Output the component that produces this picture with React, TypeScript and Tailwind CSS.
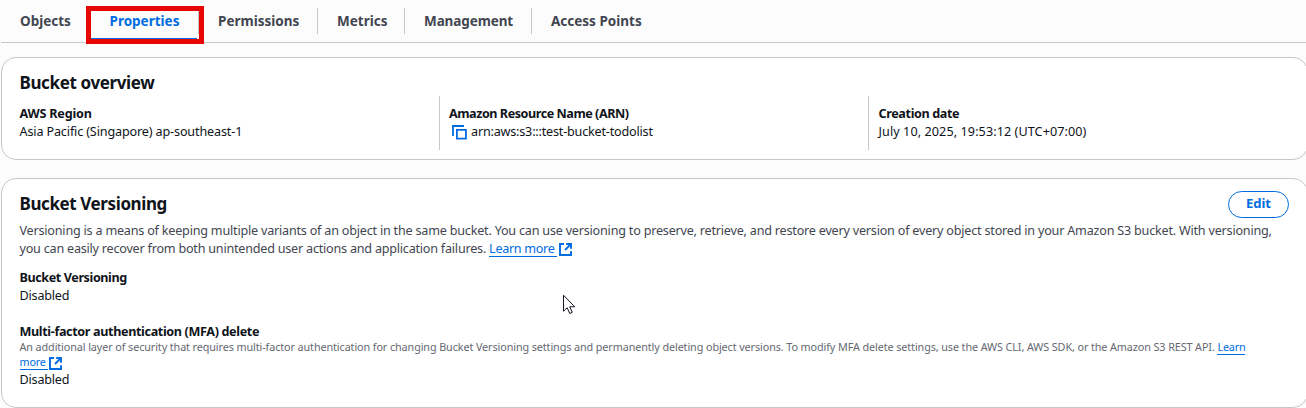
import type { ReactNode } from 'react';

function CopyIcon() {
  return (
    <svg width="15" height="15" viewBox="0 0 15 15" fill="none" stroke="#006ce0" strokeWidth="1.8" className="shrink-0">
      <path d="M1 11V1H12" />
      <path d="M4.9 4.9H13.9V13.6H4.9z" />
    </svg>
  );
}

function ExternalIcon({ className }: { className: string }) {
  return (
    <svg width="13" height="13" viewBox="0 0 13 13" fill="none" stroke="#006ce0" strokeWidth="1.9" className={`inline-block ${className}`}>
      <path d="M5 1H1V12H12V8.3" />
      <path d="M7.2 1H12V5.8M11.8 1.2L6 7" />
    </svg>
  );
}

function Tab({ children, className = '', color = 'text-[#424650]' }: { children: ReactNode; className?: string; color?: string }) {
  return (
    <div className={`flex h-[26px] items-center text-[13.5px] font-bold leading-[18px] ${color} ${className}`}>
      <span className="-mt-px">{children}</span>
    </div>
  );
}

function Field({ label, children, className = '', labelClass = '' }: { label: string; children: ReactNode; className?: string; labelClass?: string }) {
  return (
    <div className={`h-[54px] pt-[9px] ${className}`}>
      <div className={`font-bold ${labelClass}`}>{label}</div>
      {children}
    </div>
  );
}

export default function App() {
  return (
    <div className="relative h-[408px] w-[1306px] overflow-hidden whitespace-nowrap bg-[#fcfcfd] font-['Noto_Sans',sans-serif] text-[12.6px] leading-[18px] text-[#0f141a]">
      <nav className="ml-px flex h-[43px] border-b border-[#c6c6cd] pt-2">
        <Tab className="w-[90px] pl-[19px]">Objects</Tab>
        <Tab className="w-[108px] border-r border-[#c6c6cd] pl-[18.5px]" color="text-[#006ce0]">Properties</Tab>
        <Tab className="w-[119px] border-r border-[#c6c6cd] pl-[19px]">Permissions</Tab>
        <Tab className="w-[87px] border-r border-[#c6c6cd] pl-[19px]">Metrics</Tab>
        <Tab className="w-[127px] border-r border-[#c6c6cd] pl-[19px] tracking-[-0.1px]">Management</Tab>
        <Tab className="w-[130px] pl-[19px]">Access Points</Tab>
      </nav>
      <div className="absolute left-[86px] top-[6px] h-[38px] w-[118px] border-[5px] border-[#e80505]">
        <div className="mt-[27px] h-px w-[106px] bg-[#006ce0]" />
      </div>

      <section className="ml-px mt-[14px] h-[103px] w-[1307px] rounded-[15px] border border-[#c6c6cd] bg-white pl-[17.5px] pr-[18px] pt-[14px]">
        <h2 className="text-[17px] font-bold leading-[22px] tracking-[-0.37px]">Bucket overview</h2>
        <div className="mt-[2px] flex">
          <Field label="AWS Region" className="w-[419.5px] tracking-[-0.14px]" labelClass="tracking-[-0.2px]">Asia Pacific (Singapore) ap-southeast-1</Field>
          <Field label="Amazon Resource Name (ARN)" className="w-[429px] border-l border-[#c6c6cd] pl-[9px]" labelClass="tracking-[-0.46px]">
            <div className="flex items-center gap-1 pl-[3px] tracking-[-0.19px]">
              <CopyIcon />
              <span>arn:aws:s3:::test-bucket-todolist</span>
            </div>
          </Field>
          <Field label="Creation date" className="border-l border-[#c6c6cd] pl-[9.5px] tracking-[0.09px]" labelClass="tracking-[-0.37px]">July 10, 2025, 19:53:12 (UTC+07:00)</Field>
        </div>
      </section>

      <section className="ml-px mt-[18px] h-[230px] w-[1307px] rounded-[15px] border border-[#c6c6cd] bg-white pl-[17.5px] pr-[18px] pt-[12px]">
        <div className="flex h-[27px] justify-between">
          <h2 className="pt-[2px] text-[17px] font-bold leading-[22px] tracking-[-0.4px]">Bucket Versioning</h2>
          <button className="h-[27px] w-[61px] rounded-full border border-[#006ce0] pb-[3px] text-[13px] font-bold leading-none text-[#006ce0]">Edit</button>
        </div>
        <p className="mt-[4px] h-[36px] text-[#424650]">
          <span className="tracking-[-0.208px]">Versioning is a means of keeping multiple variants of an object in the same bucket. You can use versioning to preserve, retrieve, and restore every version of every object stored in your Amazon S3 bucket. With versioning,</span>
          <br />
          <span className="tracking-[-0.22px]">you can easily recover from both unintended user actions and application failures. </span>
          <a className="mr-[1.5px] inline-block h-[17px] w-[68px] border-b border-[#006ce0] align-top tracking-[-0.3px] text-[#006ce0]">Learn more</a>
          <ExternalIcon className="align-[-3px]" />
        </p>
        <div className="mt-[11px] font-bold tracking-[-0.41px]">Bucket Versioning</div>
        <div className="tracking-[-0.2px]">Disabled</div>
        <div className="mt-[18px] font-bold tracking-[-0.36px]">Multi-factor authentication (MFA) delete</div>
        <div className="h-[30px] text-[10.8px] leading-[15px] text-[#656871]">
          <p className="relative top-[-2px] h-[15px]">
            <span className="tracking-[-0.097px]">An additional layer of security that requires multi-factor authentication for changing Bucket Versioning settings and permanently deleting object versions. To modify MFA delete settings, use the AWS CLI, AWS SDK, or the Amazon S3 REST API. </span>
            <a className="inline-block h-[16px] border-b border-[#006ce0] align-top tracking-[-0.2px] text-[#006ce0]">Learn</a>
          </p>
          <p className="relative top-[-2px] flex h-[15px] gap-px">
            <a className="h-[16px] w-[28px] border-b border-[#006ce0] tracking-[-0.2px] text-[#006ce0]">more</a>
            <ExternalIcon className="mt-[3px] shrink-0" />
          </p>
        </div>
        <div className="tracking-[-0.2px]">Disabled</div>
      </section>

      <svg className="absolute left-[563px] top-[294px]" width="13" height="21" viewBox="0 0 13 21" fill="white" stroke="#171321" strokeWidth="1">
        <path d="M0.5 1.2V17.2L4.2 13.8L6.8 19.5L9.3 18.3L6.7 12.8H11.7Z" />
      </svg>
    </div>
  );
}
